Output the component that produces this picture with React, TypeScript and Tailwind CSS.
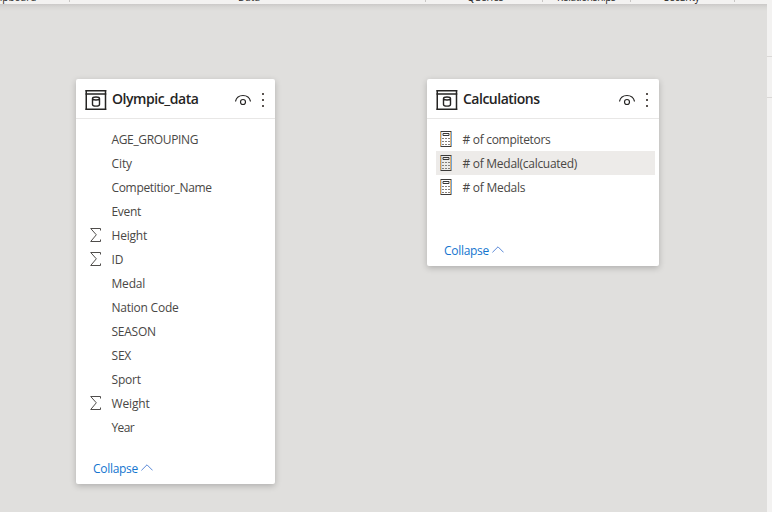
import React from "react";

type Field = { name: string; tracking: string; icon?: "sum" | "calc"; selected?: boolean };

const olympicFields: Field[] = [
  { name: "AGE_GROUPING", tracking: "tracking-[-0.35px]" },
  { name: "City", tracking: "tracking-[-0.1px]" },
  { name: "Competitior_Name", tracking: "tracking-[-0.33px]" },
  { name: "Event", tracking: "tracking-[-0.3px]" },
  { name: "Height", tracking: "tracking-[-0.2px]", icon: "sum" },
  { name: "ID", tracking: "tracking-[-0.1px]", icon: "sum" },
  { name: "Medal", tracking: "tracking-[-0.2px]" },
  { name: "Nation Code", tracking: "tracking-[-0.23px]" },
  { name: "SEASON", tracking: "tracking-[-0.25px]" },
  { name: "SEX", tracking: "tracking-[-0.2px]" },
  { name: "Sport", tracking: "tracking-[-0.2px]" },
  { name: "Weight", tracking: "tracking-[-0.15px]", icon: "sum" },
  { name: "Year", tracking: "tracking-[-0.6px]" },
];

const measureFields: Field[] = [
  { name: "# of compitetors", tracking: "tracking-[-0.3px]", icon: "calc" },
  { name: "# of Medal(calcuated)", tracking: "tracking-[-0.28px]", icon: "calc", selected: true },
  { name: "# of Medals", tracking: "tracking-[-0.25px]", icon: "calc" },
];

function TableIcon() {
  return (
    <svg width="22" height="20" viewBox="0 0 22 20" fill="none" stroke="#252423" className="shrink-0">
      <path d="M1.250 0v20M20.500 0v20" strokeWidth="1.500" />
      <path d="M.5.75h20.750M.5 4h20.750M.5 19.300h20.750" strokeWidth="1.400" />
      <path d="M7.500 8.500c0-1 1-1.500 3.500-1.500s3.500.5 3.500 1.500-1 1.500-3.500 1.500-3.500-.5-3.500-1.500Zm0 0v6c0 1 1 1.600 3.500 1.600s3.500-.6 3.500-1.600v-6" strokeWidth="1.400" />
    </svg>
  );
}

function EyeIcon() {
  return (
    <svg width="16" height="12" viewBox="0 0 16 12" fill="none" stroke="#252423" className="-mt-px shrink-0">
      <path d="M.5 7.500C1.300 3.600 4.300 1.500 8 1.500s6.700 2.100 7.500 6" strokeWidth="1.150" />
      <circle cx="8" cy="8" r="2.500" strokeWidth="1.150" />
    </svg>
  );
}

function MoreIcon() {
  return (
    <svg width="2" height="14" viewBox="0 0 2 14" fill="#5a5450" className="shrink-0">
      <path d="M0 0h2v2H0zM0 6h2v2H0zM0 12h2v2H0z" />
    </svg>
  );
}

function SumIcon() {
  return (
    <svg width="11" height="14" viewBox="0 0 11 14" fill="none" stroke="#4f4d4b">
      <path d="M10.500 2.500V.5H.7l5.600 6.300L.7 13.500h9.800v-2" />
    </svg>
  );
}

function CalcIcon() {
  return (
    <svg width="12" height="16" viewBox="0 0 12 16" fill="none">
      <path d="M.5 1v14" stroke="#d79a4d" />
      <path d="M1.500 1v14" stroke="#8fb3d9" strokeOpacity=".6" />
      <path d="M10.500 1v14" stroke="#d79a4d" strokeOpacity=".8" />
      <path d="M11.500 1v14" stroke="#70a5d8" />
      <path d="M.5.5h11M.5 15.500h11M3 2.500h6v2H3z" stroke="#3b3a39" />
      <path d="M2 7.500h8M2 10.500h8M2 13.500h8" stroke="#85807b" strokeDasharray="2 1" />
    </svg>
  );
}

function FieldRow({ field }: { field: Field }) {
  return (
    <li className={`ml-[9px] mr-1 flex h-6 items-center ${field.selected ? "bg-[#edebe9]" : ""}`}>
      <span className={`flex w-[26.5px] shrink-0 ${field.icon === "sum" ? "pl-[5px]" : "pl-1"}`}>
        {field.icon === "sum" && <SumIcon />}
        {field.icon === "calc" && <CalcIcon />}
      </span>
      <span className={`whitespace-nowrap pt-px leading-4 ${field.tracking}`}>{field.name}</span>
    </li>
  );
}

function TableCard({ title, titleTracking, fields, className }: { title: string; titleTracking: string; fields: Field[]; className: string }) {
  return (
    <section className={`absolute flex flex-col rounded-[2px] bg-white shadow-[0_2px_6px_rgba(0,0,0,0.22)] ${className}`}>
      <header className="flex h-10 shrink-0 items-center border-b border-[#e8e7e6] pl-[9px] pr-[11px] pt-[3px]">
        <TableIcon />
        <h2 className={`-mt-0.5 ml-[5px] flex-1 whitespace-nowrap text-[14px] font-semibold leading-5 text-[#252423] ${titleTracking}`}>{title}</h2>
        <EyeIcon />
        <span className="ml-[11px] flex"><MoreIcon /></span>
      </header>
      <ul className="mt-2 flex flex-col text-[12px] text-[#494745]">
        {fields.map((field) => <FieldRow key={field.name} field={field} />)}
      </ul>
      <button className="mb-[7px] ml-[17px] mt-auto flex items-center gap-[3px] self-start text-[12px] leading-4 text-[#1475cf]">
        <span className="tracking-[-0.3px]">Collapse</span>
        <svg width="12" height="7" viewBox="0 0 12 7" fill="none" stroke="#5b89d7" className="-mt-[3px]"><path d="m.4 6.400 5.600-5.600 5.600 5.600" /></svg>
      </button>
    </section>
  );
}

const ribbonGroups = [
  { name: "Clipboard", box: "w-[70px]", text: "-ml-[9px]" },
  { name: "Data", box: "w-[356px]", text: "ml-[168px]" },
  { name: "Queries", box: "w-[117px]", text: "ml-[41px]" },
  { name: "Relationships", box: "w-[88px]", text: "ml-[14px] tracking-[-0.3px]" },
  { name: "Security", box: "w-[104px]", text: "ml-[33px] tracking-[-0.2px]" },
];

export default function App() {
  return (
    <main className="flex h-[512px] w-[772px] flex-col overflow-hidden bg-[#e0dfdd] font-['Open_Sans','Noto_Sans',sans-serif]">
      <div className="flex h-1 shrink-0 items-end overflow-hidden bg-[#f3f2f1] text-[10px] leading-[14px] text-[#252423]">
        {ribbonGroups.map((group) => (
          <div key={group.name} className={`flex h-[14px] shrink-0 items-start ${group.box}`}>
            <span className={`whitespace-nowrap ${group.text}`}>{group.name}</span>
            <i className="ml-auto h-3 w-px bg-[#c8c6c4]" />
          </div>
        ))}
      </div>
      <div className="flex min-h-0 flex-1">
        <div className="relative flex-1 bg-[linear-gradient(to_bottom,#cbc9c8_0px,#d8d7d5_3px,#e0dfdd_7px)]">
          <TableCard title="Olympic_data" titleTracking="tracking-[-0.45px]" fields={olympicFields} className="left-[76px] top-[75px] h-[405px] w-[199px]" />
          <TableCard title="Calculations" titleTracking="tracking-[-0.5px]" fields={measureFields} className="left-[427px] top-[75px] h-[187px] w-[232px]" />
        </div>
        <aside className="flex w-[5px] flex-col bg-[#f3f2f1]">
          <div className="h-[53px] border-b border-[#dbd9d7]" />
          <div className="h-[41px] border-b border-[#dbd9d7]" />
        </aside>
      </div>
    </main>
  );
}
